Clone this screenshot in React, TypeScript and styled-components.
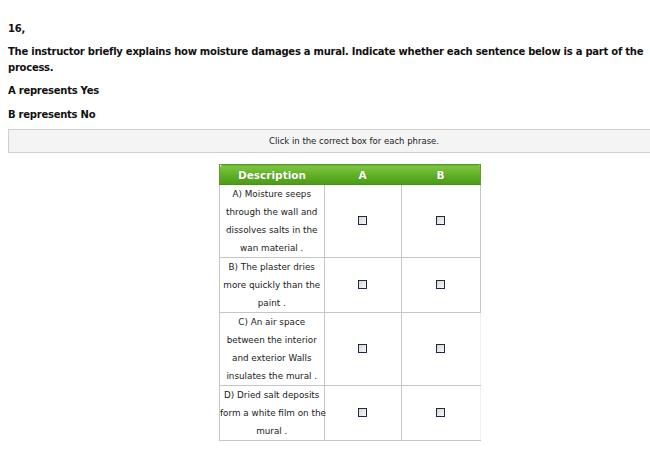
import React from "react";
import styled, { createGlobalStyle } from "styled-components";

const Global = createGlobalStyle`
  html, body { margin: 0; padding: 0; background: #ffffff; }
  body { font-family: "DejaVu Sans", Verdana, sans-serif; color: #000; overflow: hidden; }
`;

const Page = styled.div`
  width: 650px;
  height: 450px;
  padding: 21px 0 0 8px;
  box-sizing: border-box;
  overflow: hidden;
`;

const Para = styled.p<{ $gap?: number }>`
  margin: 0 0 ${(p) => p.$gap ?? 0}px 0;
  font-size: 10px;
  font-weight: bold;
  line-height: 16px;
  letter-spacing: -0.25px;
  color: #111;
`;

const Banner = styled.div`
  margin-top: 6px;
  width: 690px;
  height: 22px;
  border: 1px solid #cfcfcf;
  border-right: none;
  background: #f4f4f4;
  display: flex;
  align-items: center;
  justify-content: center;
  font-size: 8.5px;
  color: #222;
`;

const TableWrap = styled.div`
  display: flex;
  justify-content: flex-start;
  padding: 11px 0 0 211px;
`;

const Table = styled.table`
  border-collapse: collapse;
  width: 261px;
  table-layout: fixed;
`;

const Th = styled.th<{ $w: number; $first?: boolean; $last?: boolean }>`
  width: ${(p) => p.$w}px;
  height: 19px;
  padding: 0;
  font-size: 10.5px;
  font-weight: bold;
  color: #fff;
  background: linear-gradient(#80c741, #5dae24 55%, #4c9a18);
  border-top: 1px solid #5f9e2a;
  border-bottom: 1px solid #4a8f1c;
  border-left: ${(p) => (p.$first ? "1px solid #5c9d28" : "none")};
  border-right: ${(p) => (p.$last ? "1px solid #5c9d28" : "none")};
  border-top-left-radius: ${(p) => (p.$first ? "3px" : "0")};
  border-top-right-radius: ${(p) => (p.$last ? "3px" : "0")};
  text-shadow: 0 0 1px rgba(0,0,0,0.25);
`;

const Td = styled.td<{ $noRight?: boolean }>`
  border: 1px solid #c6c6c6;
  border-right-color: ${(p) => (p.$noRight ? "#f0f0f0" : "#c6c6c6")};
  padding: 0;
  text-align: center;
  vertical-align: middle;
`;

const DescText = styled.div`
  font-size: 8.8px;
  line-height: 18px;
  color: #1a1a1a;
  white-space: nowrap;
`;

const Box = styled.span`
  display: inline-block;
  width: 7px;
  height: 7px;
  border: 1px solid #1d2b48;
  background: linear-gradient(135deg, #d6d6d6, #f6f6f6);
  vertical-align: middle;
  margin-top: -4px;
`;

const rows: { lines: string[]; noRight?: boolean }[] = [
  { lines: ["A) Moisture seeps", "through the wall and", "dissolves salts in the", "wan material ."] },
  { lines: ["B) The plaster dries", "more quickly than the", "paint ."] },
  { lines: ["C) An air space", "between the interior", "and exterior Walls", "insulates the mural ."], noRight: true },
  { lines: ["D) Dried salt deposits", "form a white film on the", "mural ."], noRight: true },
];

export default function App() {
  return (
    <Page>
      <Global />
      <Para $gap={7}>16,</Para>
      <Para $gap={7}>
        The instructor briefly explains how moisture damages a mural. Indicate whether each sentence below is a part of the process.
      </Para>
      <Para $gap={8}>A represents Yes</Para>
      <Para>B represents No</Para>
      <Banner>Click in the correct box for each phrase.</Banner>
      <TableWrap>
        <Table>
          <thead>
            <tr>
              <Th $w={104} $first>Description</Th>
              <Th $w={77}>A</Th>
              <Th $w={79} $last>B</Th>
            </tr>
          </thead>
          <tbody>
            {rows.map((r, i) => (
              <tr key={i}>
                <Td>
                  <DescText>
                    {r.lines.map((l, j) => (
                      <div key={j}>{l}</div>
                    ))}
                  </DescText>
                </Td>
                <Td><Box /></Td>
                <Td $noRight={r.noRight}><Box /></Td>
              </tr>
            ))}
          </tbody>
        </Table>
      </TableWrap>
    </Page>
  );
}
